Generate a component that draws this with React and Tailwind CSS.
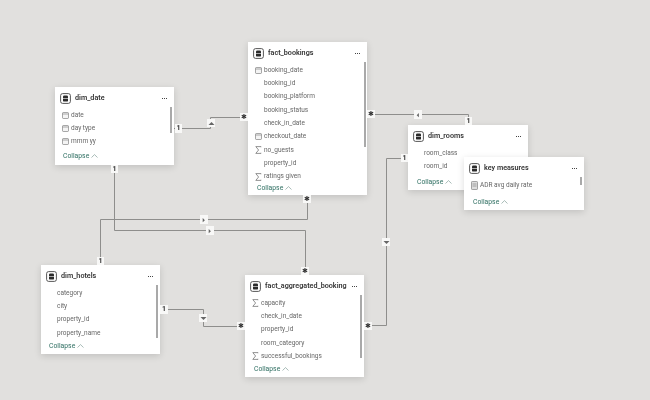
import React from 'react';

const sans = { fontFamily: 'Roboto, "Noto Sans", sans-serif' };

function TableIcon() {
  return (
    <svg width="11" height="11" viewBox="0 0 11 11" className="shrink-0">
      <rect x="0.6" y="0.6" width="9.8" height="9.8" rx="2" fill="#fff" stroke="#444" strokeWidth="0.9" />
      <rect x="3" y="2.4" width="5" height="6.2" rx="1.2" fill="#2b2b2b" />
      <line x1="3" y1="5.5" x2="8" y2="5.5" stroke="#fff" strokeWidth="0.6" />
    </svg>
  );
}

function FieldIcon({ type }) {
  if (type === 'sum') {
    return (
      <svg width="7" height="8" viewBox="0 0 7 8">
        <path d="M6 1.2V0.6H0.8L3.6 4L0.8 7.4H6V6.8" fill="none" stroke="#666" strokeWidth="0.7" />
      </svg>
    );
  }
  if (type === 'date') {
    return (
      <svg width="7" height="7" viewBox="0 0 7 7">
        <rect x="0.4" y="0.4" width="6.2" height="6.2" rx="1.3" fill="#f4f4f4" stroke="#777" strokeWidth="0.7" />
        <line x1="0.6" y1="2" x2="6.4" y2="2" stroke="#777" strokeWidth="0.6" />
      </svg>
    );
  }
  if (type === 'measure') {
    return (
      <svg width="7" height="9" viewBox="0 0 7 9">
        <rect x="0.4" y="0.4" width="6.2" height="8.2" rx="1.2" fill="#ddd" stroke="#777" strokeWidth="0.7" />
        <line x1="1.5" y1="3" x2="5.5" y2="3" stroke="#777" strokeWidth="0.6" />
        <line x1="1.5" y1="5" x2="5.5" y2="5" stroke="#777" strokeWidth="0.6" />
      </svg>
    );
  }
  return null;
}

function Collapse({ className }) {
  return (
    <div className={`flex items-center gap-[2px] h-3 text-[6.8px] text-[#2f6f62] ${className}`}>
      <span>Collapse</span>
      <svg width="7" height="4" viewBox="0 0 7 4">
        <path d="M0.5 3.5L3.5 0.6L6.5 3.5" fill="none" stroke="#6f8f88" strokeWidth="0.6" />
      </svg>
    </div>
  );
}

// one table card on the model canvas
function TableCard({ name, fields, className, barClassName, collapseClassName }) {
  return (
    <div className={`absolute flex flex-col bg-white shadow-[0_2px_7px_rgba(0,0,0,0.14)] ${className}`}>
      <div className="flex items-center h-[21.5px] shrink-0 pt-[1px] pl-[5px] pr-[7px]">
        <TableIcon />
        <span className="ml-[4px] pt-[1px] text-[7.2px] font-semibold text-[#333] whitespace-nowrap">{name}</span>
        <span className="ml-auto flex gap-[1px] shrink-0">
          <span className="w-[1px] h-[1px] bg-[#444]" />
          <span className="w-[1px] h-[1px] bg-[#444]" />
          <span className="w-[1px] h-[1px] bg-[#444]" />
        </span>
      </div>
      <div className="flex flex-col">
        {fields.map(([label, type]) => (
          <div key={label} className="relative h-[13.3px] flex items-center pl-[16px] text-[6.5px] text-[#666] whitespace-nowrap">
            <span className="absolute left-[7px] flex items-center">
              <FieldIcon type={type} />
            </span>
            <span className="pt-[1px]">{label}</span>
          </div>
        ))}
      </div>
      <Collapse className={`mt-auto ${collapseClassName}`} />
      <div className={`absolute w-[2px] bg-[#a9a9a9] ${barClassName}`} />
    </div>
  );
}

function Tag({ className, children }) {
  return (
    <div className={`absolute flex items-center justify-center bg-[#f8f8f7] text-[7px] font-bold leading-none text-[#333] ${className}`}>
      {children}
    </div>
  );
}

function Arrow({ dir }) {
  const points = {
    up: '0.5,4 6.5,4 3.5,1',
    down: '0.5,1 6.5,1 3.5,4',
    left: '4,0.5 4,6.5 1,3.5',
    right: '1,0.5 1,6.5 4,3.5',
  };
  return (
    <svg width="7" height="7" viewBox="0 0 7 5" className={dir === 'left' || dir === 'right' ? 'w-[5px] h-[7px]' : ''}>
      <polygon points={points[dir]} fill="#666" />
    </svg>
  );
}

const Star = () => <span className="text-[7px]" style={{ fontFamily: '"DejaVu Sans", sans-serif' }}>✱</span>;

export default function App() {
  return (
    <div className="relative w-[650px] h-[400px] overflow-hidden bg-[#e1e0de] blur-[0.4px]" style={sans}>
      {/* relationship lines */}
      <svg width="650" height="400" className="absolute left-0 top-0" fill="none" stroke="#8e8e8c" strokeWidth="1">
        <path d="M174 128.5H210.5V117.5H248" />
        <path d="M367 114.5H468.5V125" />
        <path d="M408 158.5H386.5V325.5H364" />
        <path d="M100.5 265V219.5H307.5V195" />
        <path d="M114.5 165V230.5H305.5V275" />
        <path d="M160 309.5H203.5V326.5H245" />
      </svg>

      <TableCard
        name="fact_bookings"
        className="left-[248px] top-[42px] w-[119px] h-[153px]"
        barClassName="left-[116px] top-[20px] h-[85px]"
        collapseClassName="ml-[9px] mb-[2px]"
        fields={[
          ['booking_date', 'date'],
          ['booking_id'],
          ['booking_platform'],
          ['booking_status'],
          ['check_in_date'],
          ['checkout_date', 'date'],
          ['no_guests', 'sum'],
          ['property_id'],
          ['ratings given', 'sum'],
        ]}
      />
      <TableCard
        name="dim_date"
        className="left-[55px] top-[87px] w-[119px] h-[78px]"
        barClassName="left-[115px] top-[20px] h-[26px]"
        collapseClassName="ml-[8px] mb-[3px]"
        fields={[
          ['date', 'date'],
          ['day type', 'date'],
          ['mmm yy', 'date'],
        ]}
      />
      <TableCard
        name="dim_rooms"
        className="left-[408px] top-[125px] w-[120px] h-[65px]"
        barClassName="hidden"
        collapseClassName="ml-[9px] mb-[2px]"
        fields={[['room_class'], ['room_id']]}
      />
      <TableCard
        name="key measures"
        className="left-[464px] top-[157px] w-[120px] h-[53px]"
        barClassName="left-[116px] top-[20px] h-[8px]"
        collapseClassName="ml-[9px] mb-[2px]"
        fields={[['ADR avg daily rate', 'measure']]}
      />
      <TableCard
        name="dim_hotels"
        className="left-[41px] top-[265px] w-[119px] h-[89px]"
        barClassName="left-[115px] top-[20px] h-[53px]"
        collapseClassName="ml-[8px] mb-[2px]"
        fields={[['category'], ['city'], ['property_id'], ['property_name']]}
      />
      <TableCard
        name="fact_aggregated_booking"
        className="left-[245px] top-[275px] w-[119px] h-[102px]"
        barClassName="left-[115px] top-[20px] h-[63px]"
        collapseClassName="ml-[9px] mb-[2px]"
        fields={[
          ['capacity', 'sum'],
          ['check_in_date'],
          ['property_id'],
          ['room_category'],
          ['successful_bookings', 'sum'],
        ]}
      />

      {/* cardinality markers */}
      <Tag className="left-[175px] top-[124px] w-[7px] h-[9px]">1</Tag>
      <Tag className="left-[240px] top-[113px] w-[8px] h-[8px]"><Star /></Tag>
      <Tag className="left-[367px] top-[110px] w-[8px] h-[8px]"><Star /></Tag>
      <Tag className="left-[465px] top-[117px] w-[7px] h-[8px]">1</Tag>
      <Tag className="left-[401px] top-[154px] w-[7px] h-[8px]">1</Tag>
      <Tag className="left-[364px] top-[322px] w-[8px] h-[8px]"><Star /></Tag>
      <Tag className="left-[97px] top-[257px] w-[7px] h-[8px]">1</Tag>
      <Tag className="left-[303px] top-[195px] w-[8px] h-[8px]"><Star /></Tag>
      <Tag className="left-[111px] top-[165px] w-[7px] h-[8px]">1</Tag>
      <Tag className="left-[301px] top-[267px] w-[8px] h-[8px]"><Star /></Tag>
      <Tag className="left-[160px] top-[305px] w-[8px] h-[9px]">1</Tag>
      <Tag className="left-[237px] top-[322px] w-[8px] h-[8px]"><Star /></Tag>

      {/* crossfilter direction */}
      <Tag className="left-[207px] top-[119px] w-[8px] h-[8px]"><Arrow dir="up" /></Tag>
      <Tag className="left-[414px] top-[110px] w-[8px] h-[9px]"><Arrow dir="left" /></Tag>
      <Tag className="left-[200px] top-[215px] w-[8px] h-[9px]"><Arrow dir="right" /></Tag>
      <Tag className="left-[206px] top-[226px] w-[8px] h-[9px]"><Arrow dir="right" /></Tag>
      <Tag className="left-[199px] top-[314px] w-[8px] h-[8px]"><Arrow dir="down" /></Tag>
      <Tag className="left-[382px] top-[238px] w-[8px] h-[8px]"><Arrow dir="down" /></Tag>
    </div>
  );
}
